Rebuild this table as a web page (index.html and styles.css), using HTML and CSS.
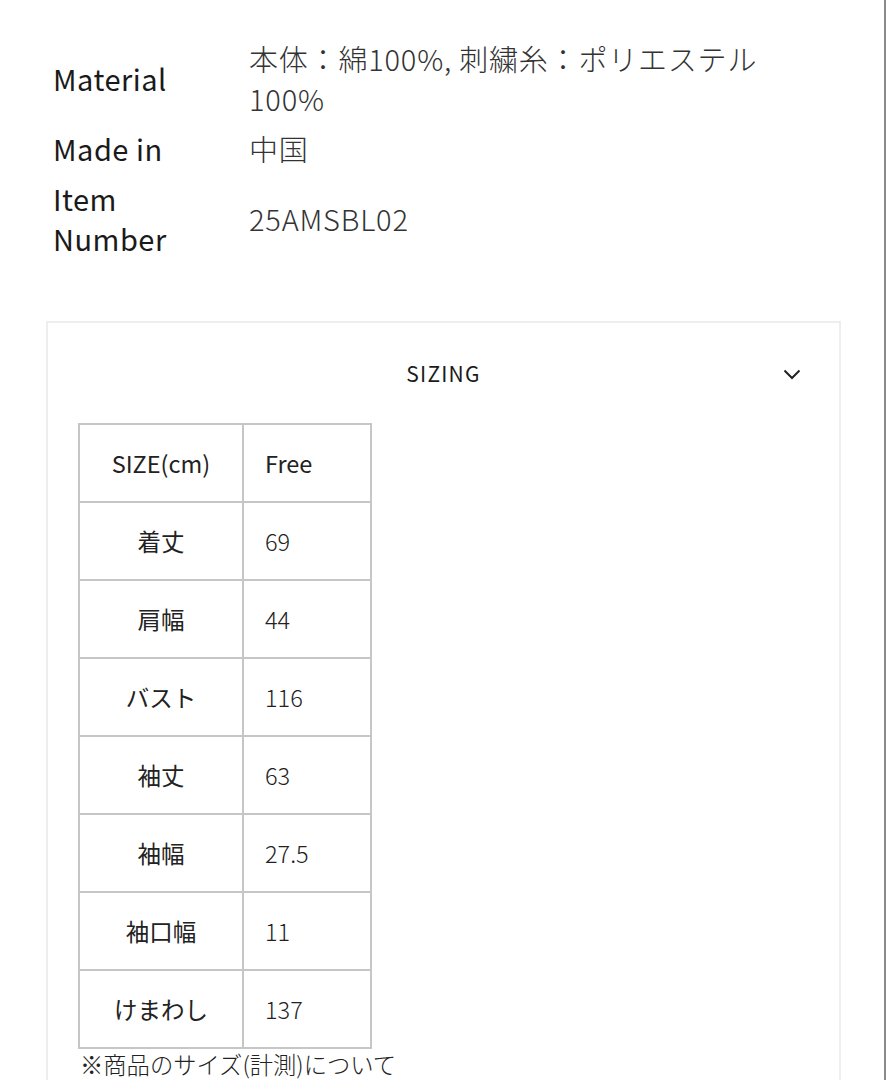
FILE: index.html
```html
<!DOCTYPE html>
<html lang="ja">
<head>
<meta charset="utf-8">
<link rel="stylesheet" href="styles.css">
</head>
<body>
<div class="page">
  <dl class="specs">
    <div class="spec-row">
      <dt>Material</dt>
      <dd>本体：綿100%, 刺繍糸：ポリエステル100%</dd>
    </div>
    <div class="spec-row">
      <dt>Made in</dt>
      <dd>中国</dd>
    </div>
    <div class="spec-row">
      <dt>Item<br>Number</dt>
      <dd>25AMSBL02</dd>
    </div>
  </dl>

  <section class="card">
    <div class="card-head">
      <h2 class="card-title">SIZING</h2>
      <svg class="chevron" width="18" height="11" viewBox="0 0 18 11"><path d="M1.5 1.5 L9 9 L16.5 1.5" fill="none" stroke="#222" stroke-width="2"/></svg>
    </div>
    <table class="size-table">
      <tr><th>SIZE(cm)</th><td class="head">Free</td></tr>
      <tr><th>着丈</th><td>69</td></tr>
      <tr><th>肩幅</th><td>44</td></tr>
      <tr><th>バスト</th><td>116</td></tr>
      <tr><th>袖丈</th><td>63</td></tr>
      <tr><th>袖幅</th><td>27.5</td></tr>
      <tr><th>袖口幅</th><td>11</td></tr>
      <tr><th>けまわし</th><td>137</td></tr>
    </table>
    <p class="note">※商品のサイズ(計測)について</p>
  </section>
</div>
<div class="scrollbar"></div>
</body>
</html>
```

FILE: styles.css
```css
html, body {
  margin: 0;
  padding: 0;
  background: #fff;
}
body {
  font-family: "Noto Sans CJK JP", "Noto Sans", sans-serif;
  color: #222;
  overflow: hidden;
  height: 1080px;
}
.page {
  padding: 38px 46px 0 46px;
}
.specs {
  margin: 0;
  padding: 0 0 0 7px;
  display: flex;
  flex-direction: column;
  gap: 10px;
}
.spec-row {
  display: flex;
  align-items: center;
}
.spec-row dt {
  width: 196px;
  flex: none;
  font-size: 29px;
  line-height: 40px;
  font-weight: 400;
  letter-spacing: 0.5px;
  color: #1a1a1a;
}
.spec-row dd {
  margin: 0;
  width: 525px;
  font-size: 29px;
  line-height: 40px;
  font-weight: 300;
  letter-spacing: 0.8px;
  color: #333;
}
.card {
  margin-top: 63px;
  border: 2px solid #eeeeee;
  border-bottom: none;
  padding: 0 30px;
  height: 800px;
}
.card-head {
  position: relative;
  height: 100px;
  display: flex;
  align-items: center;
  justify-content: center;
}
.card-title {
  margin: 0;
  font-size: 21px;
  font-weight: 400;
  letter-spacing: 1.2px;
  color: #1a1a1a;
  line-height: 32px;
}
.chevron {
  position: absolute;
  right: 8px;
  top: 46px;
}
.size-table {
  border-collapse: collapse;
  font-size: 23.5px;
  color: #222;
}
.size-table th,
.size-table td {
  border: 2px solid #c6c6c6;
  height: 76px;
  padding: 0;
  line-height: 30px;
}
.size-table th {
  width: 162px;
  font-weight: 400;
  text-align: center;
}
.size-table td {
  width: 105px;
  padding-left: 21px;
  font-weight: 300;
  text-align: left;
}
.size-table td.head {
  font-weight: 400;
}
.note {
  margin: 0;
  padding-left: 2px;
  font-size: 23.3px;
  line-height: 30px;
  font-weight: 300;
  color: #222;
}
.scrollbar {
  position: fixed;
  top: 0;
  right: 1px;
  width: 2px;
  height: 1080px;
  background: #8a8a8a;
}
```
